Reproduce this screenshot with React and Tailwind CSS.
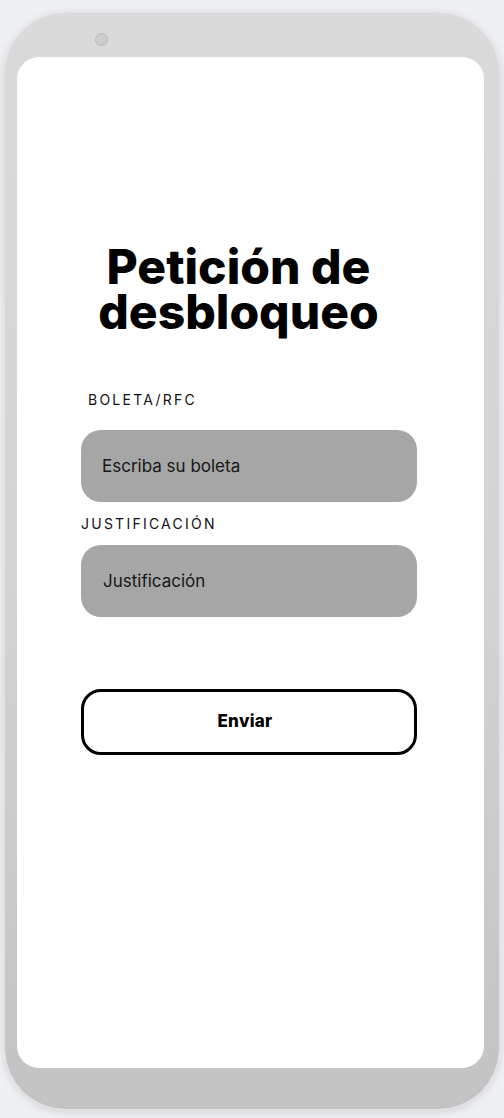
import React, { useState } from 'react';

const font = { fontFamily: 'Inter, "Noto Sans", sans-serif' };

const UnlockRequest = () => {
  const [boleta, setBoleta] = useState('');
  const [justificacion, setJustificacion] = useState('');

  return (
    <div className="min-h-screen bg-[#eef0f3] pt-[12px] pl-[4px] pr-[4px] pb-[8px]" style={font}>
      {/* marco del teléfono */}
      <div className="flex h-[1098px] flex-col rounded-[62px] border border-[#e2e2e2] bg-gradient-to-b from-[#dadada] via-[#d4d4d4] to-[#c3c3c3] pl-[12px] pr-[15px] shadow-[0_2px_10px_rgba(0,0,0,0.12)]">
        {/* barra superior con cámara */}
        <div className="flex h-[44px] items-start pl-[78px] pt-[20px]">
          <div className="h-[13px] w-[13px] rounded-full border border-[#b9b9b9] bg-[#cdcdcd]" />
        </div>

        {/* pantalla */}
        <div className="flex flex-1 flex-col rounded-[22px] bg-white">
          <div className="flex flex-col pl-[64px] pr-[67px] pt-[187px]">
            <h1 className="pr-[21px] text-center text-[48px] font-extrabold leading-[45px] text-black">
              Petición de
              <br />
              desbloqueo
            </h1>

            <label className="mt-[57px] pl-[7px] text-[14px] leading-[18px] tracking-[0.16em] text-[#111]">
              BOLETA/RFC
            </label>
            <input
              type="text"
              value={boleta}
              onChange={(e) => setBoleta(e.target.value)}
              placeholder="Escriba su boleta"
              className="mt-[21px] h-[72px] w-full rounded-[20px] bg-[#a6a6a6] px-[21px] text-[17px] text-[#161616] outline-none placeholder:text-[#161616]"
            />

            <label className="mt-[13px] text-[14px] leading-[18px] tracking-[0.16em] text-[#111]">
              JUSTIFICACIÓN
            </label>
            <input
              type="text"
              value={justificacion}
              onChange={(e) => setJustificacion(e.target.value)}
              placeholder="Justificación"
              className="mt-[12px] h-[72px] w-full rounded-[20px] bg-[#a6a6a6] px-[22px] text-[17px] text-[#161616] outline-none placeholder:text-[#161616]"
            />

            <button
              type="button"
              className="mt-[72px] h-[66px] w-full rounded-[20px] border-[3px] border-black bg-white pr-[8px] text-[17px] font-extrabold tracking-[0.3px] text-black"
            >
              Enviar
            </button>
          </div>
        </div>

        <div className="h-[41px]" />
      </div>
    </div>
  );
};

export default UnlockRequest;
